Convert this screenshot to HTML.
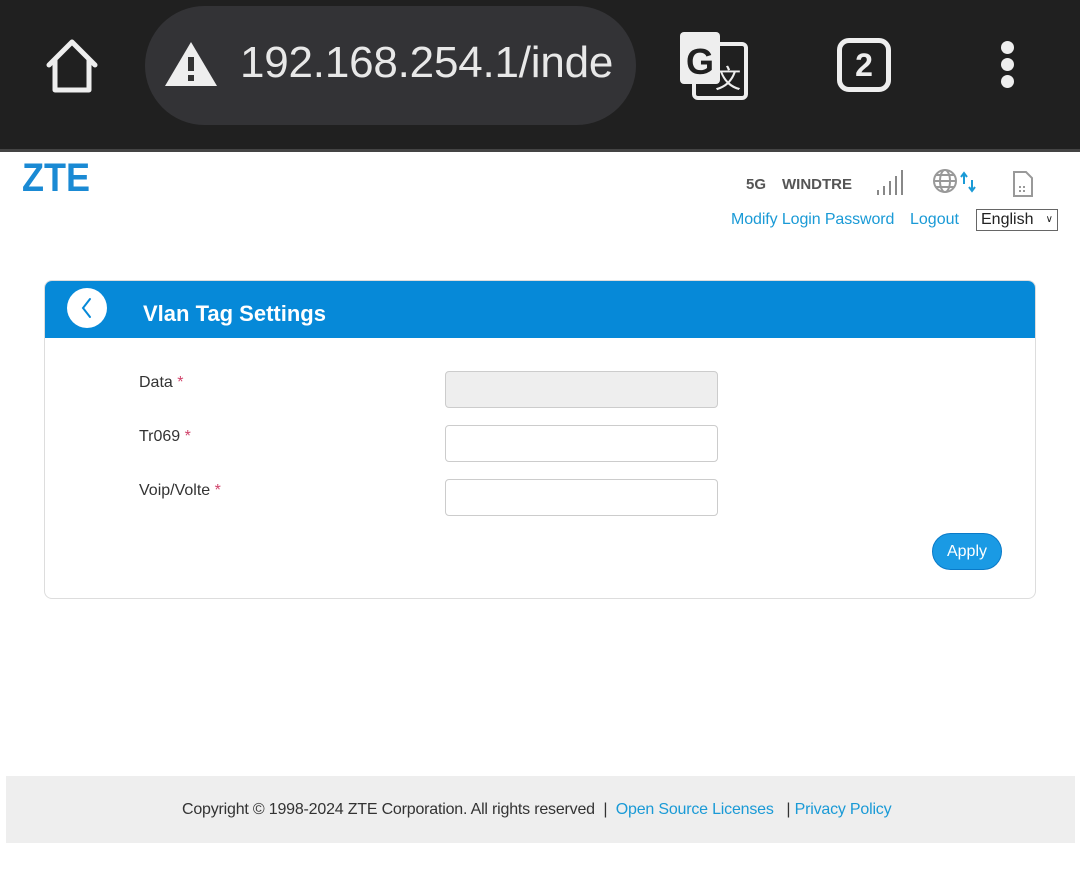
<!DOCTYPE html>
<html><head><style>
*{margin:0;padding:0;box-sizing:border-box}
body{width:1080px;height:876px;background:#fff;font-family:"Liberation Sans",sans-serif;position:relative;overflow:hidden}
.abs{position:absolute}
.bar{left:0;top:0;width:1080px;height:150px;background:#202020}
.sep{left:0;top:149px;width:1080px;height:3px;background:#444}
.url{left:145px;top:6px;width:491px;height:119px;border-radius:60px;background:#333336}
.urltext{left:240px;top:38px;font-size:44px;color:#e8e8e8;letter-spacing:-0.2px}
a,.lnk{color:#1a9ad6}
input{position:absolute;width:273px;height:37px;border:1px solid #ccc;border-radius:4px;background:#fff}
.lbl{font-size:16px;color:#333}
.lbl span{color:#d0436a}
</style></head><body>
<div class="abs bar"></div><div class="abs sep"></div>
<svg class="abs" style="left:44px;top:38px" width="56" height="56" viewBox="0 0 56 56"><path d="M5 27 L28 4 L51 27 M11 22 V52 H45 V22" fill="none" stroke="#eee" stroke-width="5" stroke-linejoin="round" stroke-linecap="round"/></svg>
<div class="abs url"></div>
<svg class="abs" style="left:163px;top:40px" width="56" height="48" viewBox="0 0 56 48"><path d="M28 2 L54 46 H2 Z" fill="#eee"/><rect x="25" y="17" width="6" height="14" fill="#333"/><rect x="25" y="35" width="6" height="6" fill="#333"/></svg>
<div class="abs urltext">192.168.254.1/inde</div>
<svg class="abs" style="left:680px;top:32px" width="68" height="68" viewBox="0 0 68 68"><rect x="14" y="12" width="52" height="54" rx="4" fill="none" stroke="#eee" stroke-width="4"/><rect x="0" y="0" width="40" height="52" rx="4" fill="#eee"/><text x="20" y="42" font-size="36" font-weight="bold" text-anchor="middle" fill="#202020" font-family="Liberation Sans">G</text><text x="48" y="56" font-size="26" text-anchor="middle" fill="#eee">文</text></svg>
<div class="abs" style="left:837px;top:38px;width:54px;height:54px;border:5px solid #eee;border-radius:12px;color:#eee;font-size:32px;font-weight:bold;text-align:center;line-height:44px">2</div>
<div class="abs" style="left:1001px;top:41px;width:13px;height:13px;border-radius:50%;background:#eee"></div>
<div class="abs" style="left:1001px;top:58px;width:13px;height:13px;border-radius:50%;background:#eee"></div>
<div class="abs" style="left:1001px;top:75px;width:13px;height:13px;border-radius:50%;background:#eee"></div>

<div class="abs" style="left:22px;top:156px;font-size:40px;font-weight:bold;color:#1a8ad4;transform:scaleX(0.9);transform-origin:left">ZTE</div>
<div class="abs" style="left:746px;top:176px;font-size:15px;font-weight:bold;color:#555">5G</div>
<div class="abs" style="left:782px;top:176px;font-size:15px;font-weight:bold;color:#555">WINDTRE</div>
<svg class="abs" style="left:876px;top:168px" width="30" height="28"><g fill="#888"><rect x="1" y="22" width="2" height="5"/><rect x="7" y="18" width="2" height="9"/><rect x="13" y="13" width="2" height="14"/><rect x="19" y="8" width="2" height="19"/><rect x="25" y="2" width="2" height="25"/></g></svg>
<svg class="abs" style="left:932px;top:168px" width="48" height="28"><circle cx="13" cy="13" r="11" fill="none" stroke="#999" stroke-width="2"/><ellipse cx="13" cy="13" rx="5" ry="11" fill="none" stroke="#999" stroke-width="2"/><path d="M2 13H24M4 7H22M4 19H22" stroke="#999" stroke-width="2"/><path d="M32 16V6M29 9L32 5L35 9" stroke="#1a9ad6" stroke-width="2" fill="none"/><path d="M40 12V22M37 19L40 23L43 19" stroke="#1a9ad6" stroke-width="2" fill="none"/></svg>
<svg class="abs" style="left:1011px;top:170px" width="24" height="28"><path d="M3 2H15L21 8V26H3Z" fill="none" stroke="#999" stroke-width="2"/><g fill="#999"><rect x="8" y="16" width="2" height="2"/><rect x="12" y="16" width="2" height="2"/><rect x="8" y="20" width="2" height="2"/><rect x="12" y="20" width="2" height="2"/></g></svg>
<div class="abs lnk" style="left:731px;top:211px;font-size:16px;letter-spacing:-0.1px">Modify Login Password</div>
<div class="abs lnk" style="left:910px;top:211px;font-size:16px">Logout</div>
<div class="abs" style="left:976px;top:209px;width:82px;height:22px;border:1px solid #666;font-size:16px;color:#222;padding-left:4px;line-height:20px">English <span style="font-size:10px;position:absolute;right:4px;top:0">∨</span></div>

<div class="abs" style="left:44px;top:280px;width:992px;height:319px;border:1px solid #ddd;border-radius:8px;overflow:hidden">
<div style="height:57px;background:#0689d8"></div></div>
<div class="abs" style="left:67px;top:288px;width:40px;height:40px;border-radius:50%;background:#fff"></div>
<svg class="abs" style="left:67px;top:288px" width="40" height="40"><path d="M23 11 L16 20 L23 29" fill="none" stroke="#0689d8" stroke-width="2" stroke-linecap="round"/></svg>
<div class="abs" style="left:143px;top:301px;font-size:22px;font-weight:bold;color:#fff">Vlan Tag Settings</div>
<div class="abs lbl" style="left:139px;top:374px">Data <span>*</span></div>
<div class="abs lbl" style="left:139px;top:428px">Tr069 <span>*</span></div>
<div class="abs lbl" style="left:139px;top:482px">Voip/Volte <span>*</span></div>
<input style="left:445px;top:371px;background:#eee">
<input style="left:445px;top:425px">
<input style="left:445px;top:479px">
<div class="abs" style="left:932px;top:533px;width:70px;height:37px;border-radius:19px;background:#1a9ae4;border:1px solid #0a7ac8;color:#fff;font-size:16px;text-align:center;line-height:35px">Apply</div>

<div class="abs" style="left:6px;top:776px;width:1069px;height:67px;background:#eee"></div>
<div class="abs" style="left:182px;top:801px;font-size:16px;color:#333;letter-spacing:-0.2px">Copyright © 1998-2024 ZTE Corporation. All rights reserved &nbsp;| &nbsp;<span class="lnk">Open Source Licenses</span> &nbsp;&nbsp;| <span class="lnk">Privacy Policy</span></div>
</body></html>
